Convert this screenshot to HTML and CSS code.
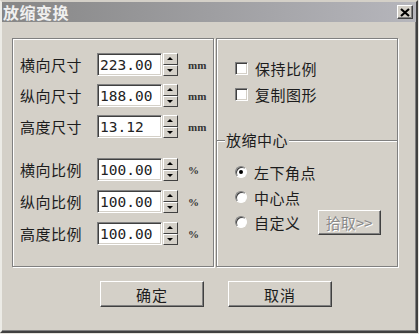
FILE: index.html
```html
<!doctype html>
<html lang="zh-CN">
	<head>
		<meta name="viewport" content="width=device-width,initial-scale=1" />
		<title>放缩变换</title>
		<link rel="stylesheet" href="styles.css">
	</head>
	<body>
		<div class="window">
			<div class="titlebar">
				<span class="title">放缩变换</span>
				<span class="close">
					<svg width="10" height="9" viewBox="0 0 10 9"><path d="M1 1 L9 8 M9 1 L1 8" stroke="#000" stroke-width="2.2" /></svg>
				</span>
			</div>

			<div class="content">
				<div class="frame">
					<div class="panel panel-left">
						<div class="fields">
							<div class="field">
								<span class="label">横向尺寸</span>
								<span class="input">223.00</span>
								<span class="spin"><i class="up"></i><i class="down"></i></span>
								<span class="unit">mm</span>
							</div>
							<div class="field">
								<span class="label">纵向尺寸</span>
								<span class="input">188.00</span>
								<span class="spin"><i class="up"></i><i class="down"></i></span>
								<span class="unit">mm</span>
							</div>
							<div class="field">
								<span class="label">高度尺寸</span>
								<span class="input">13.12</span>
								<span class="spin"><i class="up"></i><i class="down"></i></span>
								<span class="unit">mm</span>
							</div>
						</div>
						<div class="fields fields-scale">
							<div class="field">
								<span class="label">横向比例</span>
								<span class="input">100.00</span>
								<span class="spin"><i class="up"></i><i class="down"></i></span>
								<span class="unit">%</span>
							</div>
							<div class="field">
								<span class="label">纵向比例</span>
								<span class="input">100.00</span>
								<span class="spin"><i class="up"></i><i class="down"></i></span>
								<span class="unit">%</span>
							</div>
							<div class="field">
								<span class="label">高度比例</span>
								<span class="input">100.00</span>
								<span class="spin"><i class="up"></i><i class="down"></i></span>
								<span class="unit">%</span>
							</div>
						</div>
					</div>

					<div class="panel panel-right">
						<div class="checks">
							<label class="option"><span class="checkbox"></span>保持比例</label>
							<label class="option"><span class="checkbox"></span>复制图形</label>
						</div>
						<fieldset class="group">
							<legend>放缩中心</legend>
							<label class="option"><span class="radio is-checked"></span>左下角点</label>
							<label class="option"><span class="radio"></span>中心点</label>
							<label class="option"><span class="radio"></span>自定义<span class="button button-pick" aria-disabled="true">拾取&gt;&gt;</span></label>
						</fieldset>
					</div>
				</div>

				<div class="actions">
					<span class="button button-main">确定</span>
					<span class="button button-main">取消</span>
				</div>
			</div>
		</div>
	</body>
</html>
```

FILE: styles.css
```css
* {
	box-sizing: border-box;
}

body {
	margin: 0;
	background: #e6e4de;
	font-family: "Noto Sans CJK SC", "DejaVu Sans", sans-serif;
	font-size: 15px;
	color: #1c1c1c;
}

.window {
	width: 418px;
	height: 333px;
	background: #d4d0c8;
	border-style: solid;
	border-width: 2px 2px 2px 2px;
	border-color: #d4d0c8 #404040 #404040 #ecebe6;
	box-shadow: inset -1px -1px 0 #808080;
}

.titlebar {
	display: flex;
	align-items: center;
	justify-content: space-between;
	height: 20px;
	padding: 0 3px 0 1px;
	background: linear-gradient(to right, #868686, #b6b6bc);
}

.title {
	color: #f0f0f0;
	font-size: 16px;
	font-weight: 700;
	letter-spacing: 0.5px;
	line-height: 20px;
}

.close {
	display: flex;
	align-items: center;
	justify-content: center;
	width: 16px;
	height: 14px;
	background: #d4d0c8;
	border: 1px solid;
	border-color: #fff #404040 #404040 #fff;
	box-shadow: inset -1px -1px 0 #808080;
}

.content {
	padding: 16px 0 0 10px;
}

.frame {
	display: flex;
	gap: 2px;
	height: 229px;
}

.panel {
	border: 1px solid #808080;
	box-shadow: inset 1px 1px 0 #fff, 1px 1px 0 #fff;
}

.panel-left {
	width: 202px;
	padding: 14px 0 0 7px;
}

.panel-right {
	display: flex;
	flex-direction: column;
	width: 182px;
}

/* size / scale rows */
.fields {
	display: flex;
	flex-direction: column;
	gap: 8px;
}

.fields-scale {
	gap: 9px;
	margin-top: 20px;
}

.field {
	display: flex;
	align-items: center;
	height: 23px;
}

.label {
	width: 77px;
	letter-spacing: 0.5px;
}

.input {
	width: 65px;
	height: 23px;
	padding: 1px 0 0 2px;
	background: #fff;
	border: 1px solid;
	border-color: #808080 #fff #fff #808080;
	box-shadow: inset 1px 1px 0 #404040, inset -1px -1px 0 #d4d0c8;
	font-family: "DejaVu Sans Mono", monospace;
	font-size: 14.5px;
	line-height: 20px;
	color: #222;
}

.spin {
	display: flex;
	flex-direction: column;
	width: 15px;
	height: 23px;
	margin-left: 1px;
}

.spin i {
	position: relative;
	flex: 1;
	background: #d4d0c8;
	border: 1px solid;
	border-color: #fff #404040 #404040 #fff;
}

.spin i::after {
	content: "";
	position: absolute;
	left: 3px;
	top: 3px;
	border-left: 3px solid transparent;
	border-right: 3px solid transparent;
}

.spin .up::after {
	border-bottom: 3px solid #000;
}

.spin .down::after {
	border-top: 3px solid #000;
}

.unit {
	margin-left: 10px;
	font-family: "Liberation Serif", serif;
	font-size: 11px;
	font-weight: 700;
	color: #333;
}

/* right side */
.checks {
	display: flex;
	flex-direction: column;
	gap: 6px;
	padding: 19px 0 0 18px;
	height: 92px;
}

.option {
	display: flex;
	align-items: center;
	gap: 7px;
	height: 20px;
	letter-spacing: 0.5px;
}

.checkbox {
	width: 13px;
	height: 13px;
	background: #fff;
	border: 1px solid;
	border-color: #808080 #fff #fff #808080;
	box-shadow: inset 1px 1px 0 #404040, inset -1px -1px 0 #d4d0c8;
}

.group {
	display: flex;
	flex-direction: column;
	gap: 5px;
	flex: 1;
	margin: 0;
	padding: 13px 0 0 0;
	border: 0;
	border-top: 1px solid #808080;
	box-shadow: inset 0 1px 0 #fff;
}

.group legend {
	margin-left: 8px;
	padding: 0 1px;
	background: #d4d0c8;
	letter-spacing: 0.5px;
	line-height: 18px;
}

.group .option {
	margin-left: 18px;
}

.radio {
	position: relative;
	width: 12px;
	height: 12px;
	border-radius: 50%;
	background: #fff;
	border: 1px solid;
	border-color: #808080 #fff #fff #808080;
	box-shadow: inset 1px 1px 0 #404040;
}

.radio.is-checked::after {
	content: "";
	position: absolute;
	left: 3px;
	top: 3px;
	width: 4px;
	height: 4px;
	border-radius: 50%;
	background: #000;
}

/* buttons */
.button {
	display: flex;
	align-items: center;
	justify-content: center;
	background: #d4d0c8;
	border: 1px solid;
	border-color: #fff #404040 #404040 #fff;
	box-shadow: inset -1px -1px 0 #808080;
}

.button-pick {
	width: 63px;
	height: 25px;
	margin-left: 10px;
	color: #8a8a8a;
	text-shadow: 1px 1px 0 #fff;
	letter-spacing: 0;
}

.actions {
	display: flex;
	gap: 24px;
	padding: 14px 0 0 88px;
}

.button-main {
	width: 104px;
	height: 26px;
	letter-spacing: 1px;
}
```
